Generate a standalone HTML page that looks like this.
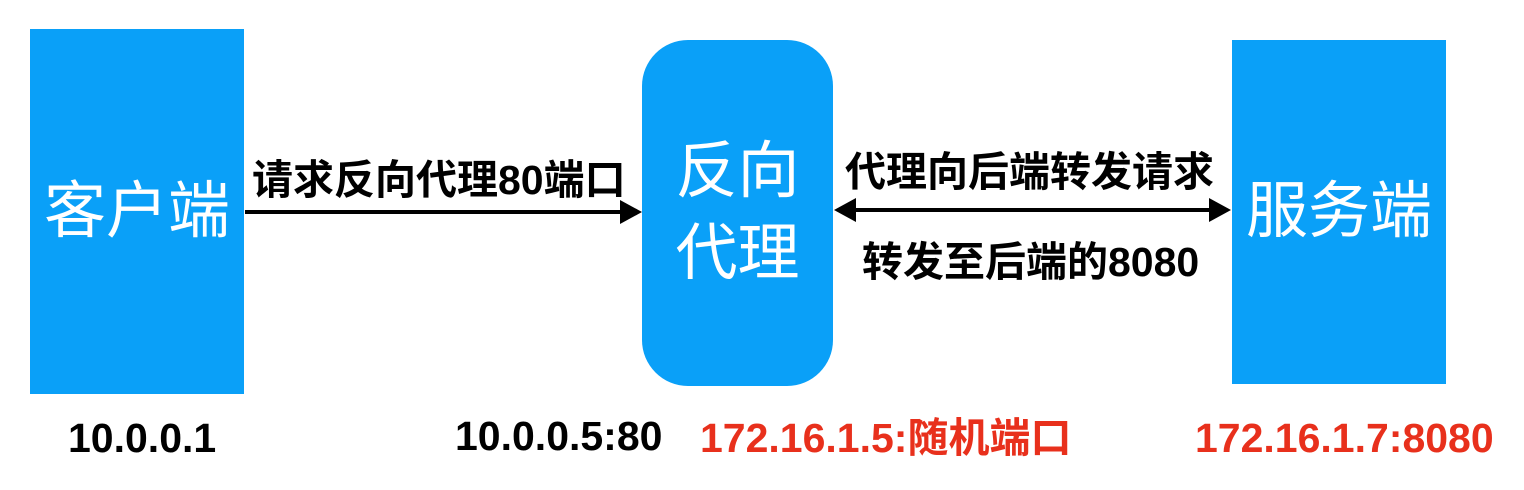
<!DOCTYPE html>
<html><head><meta charset="utf-8"><style>
body{margin:0;width:1524px;height:490px;background:#fff;position:relative;overflow:hidden;font-family:"Liberation Sans","Noto Sans CJK SC",sans-serif}
.b{position:absolute;background:#0aa0f8;color:#fff;display:flex;align-items:center;justify-content:center;font-size:62px;text-align:center;line-height:82px}
.t{position:absolute;font-weight:bold;font-size:41px;white-space:nowrap;line-height:48px}
.r{color:#e8301c}
</style></head><body>
<div class="b" style="left:30px;top:29px;width:214px;height:365px">客户端</div>
<div class="b" style="left:642px;top:40px;width:191px;height:346px;border-radius:46px">反向<br>代理</div>
<div class="b" style="left:1232px;top:40px;width:214px;height:344px">服务端</div>
<svg style="position:absolute;left:0;top:0" width="1524" height="490">
<line x1="245" y1="212" x2="625" y2="212" stroke="#000" stroke-width="4"/>
<polygon points="642,212 620,200 620,224" fill="#000"/>
<line x1="850" y1="210" x2="1215" y2="210" stroke="#000" stroke-width="4"/>
<polygon points="834,210 856,198 856,222" fill="#000"/>
<polygon points="1231,210 1209,198 1209,222" fill="#000"/>
</svg>
<div class="t" style="left:252px;top:156px">请求反向代理80端口</div>
<div class="t" style="left:845px;top:148px">代理向后端转发请求</div>
<div class="t" style="left:862px;top:238px">转发至后端的8080</div>
<div class="t" style="left:68px;top:414px">10.0.0.1</div>
<div class="t" style="left:455px;top:412px">10.0.0.5:80</div>
<div class="t r" style="left:700px;top:414px">172.16.1.5:随机端口</div>
<div class="t r" style="left:1195px;top:414px">172.16.1.7:8080</div>
</body></html>
